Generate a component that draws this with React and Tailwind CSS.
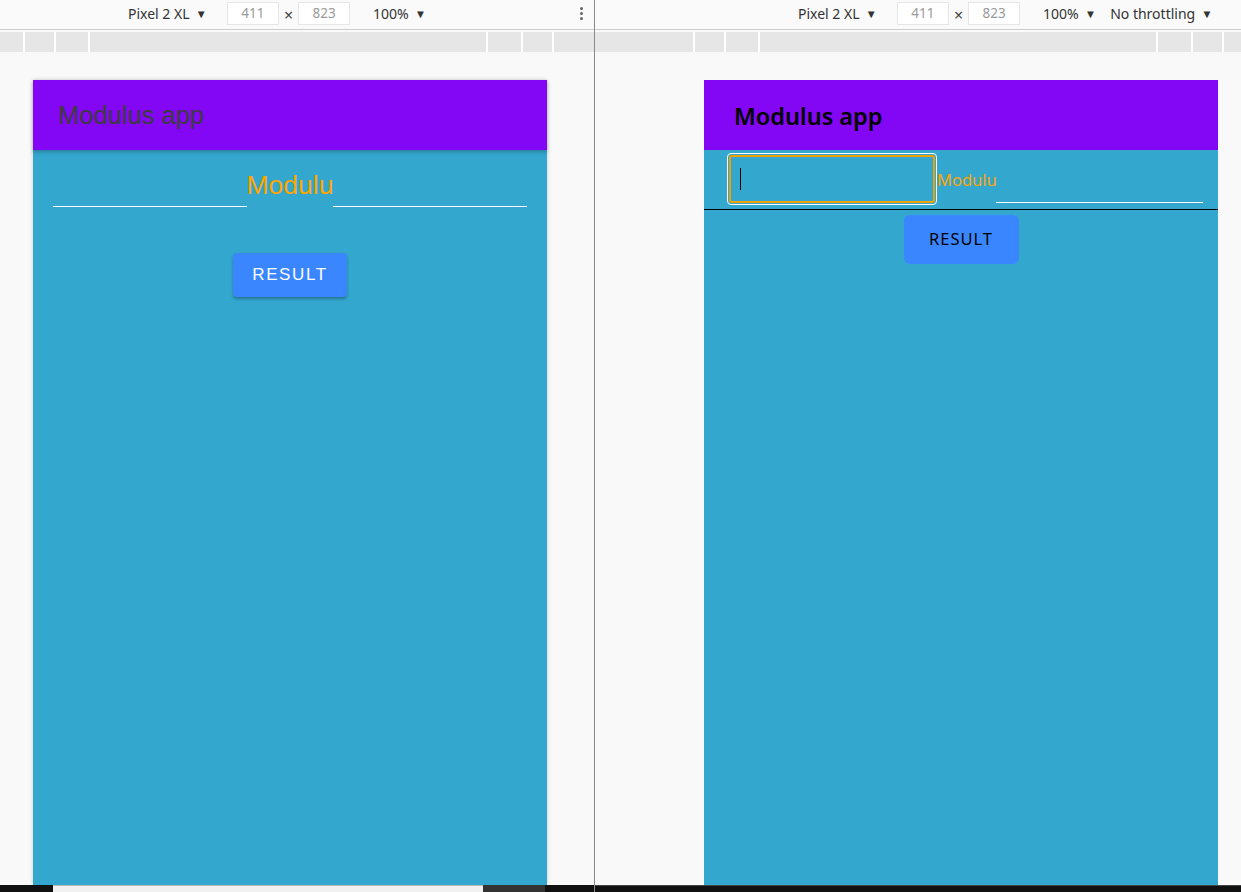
import React from 'react';

const toolbarFont = { fontFamily: '"Noto Sans", "Open Sans", sans-serif' };

const Caret = () => <span className="text-[11.5px] text-[#333] ml-[6px]">▼</span>;

const SizeBox = ({ value }) => (
    <div className="w-[52px] h-[23px] border border-[#e6e6e6] bg-white flex items-center justify-center text-[13.5px] text-[#9a9a9a]">
        {value}
    </div>
);

// barre d'outils du mode appareil
const Toolbar = ({ left, throttling, kebab }) => (
    <div className="h-[30px] border-b border-[#cdcdcd] bg-[#fafafa] flex items-center text-[14px] text-[#333] pb-[2px]" style={toolbarFont}>
        <div className="flex items-center" style={{ marginLeft: left }}>
            <span>Pixel 2 XL</span>
            <Caret />
        </div>
        <div className="flex items-center ml-[20px]">
            <SizeBox value="411" />
            <span className="mx-[5px] mt-[3px] text-[16px] text-[#444]">×</span>
            <SizeBox value="823" />
        </div>
        <div className="flex items-center ml-[23px]">
            <span>100%</span>
            <Caret />
        </div>
        {throttling && (
            <div className="flex items-center ml-[14px]">
                <span>No throttling</span>
                <Caret />
            </div>
        )}
        {kebab && (
            <div className="ml-auto mr-[11px] flex flex-col gap-[2px]">
                <span className="w-[3px] h-[3px] rounded-full bg-[#666]" />
                <span className="w-[3px] h-[3px] rounded-full bg-[#666]" />
                <span className="w-[3px] h-[3px] rounded-full bg-[#666]" />
            </div>
        )}
    </div>
);

const Ruler = ({ widths }) => (
    <div className="mt-[2px] h-[20px] flex">
        {widths.map((w, i) => (
            <div key={i} className="h-full bg-[#e6e6e6] border-r-2 border-white" style={{ width: w }} />
        ))}
        <div className="h-full flex-1 bg-[#e6e6e6]" />
    </div>
);

const LeftApp = () => (
    <div className="w-[514px] h-full bg-[#34a7cf] shadow-[0_0_4px_rgba(0,0,0,0.18)] flex flex-col">
        <div className="h-[70px] bg-[#8307f4] flex items-center pl-[25px] shadow-[0_2px_4px_rgba(0,0,0,0.25)] relative z-10">
            <span className="text-[25.5px] text-[#3c3c3c]" style={{ fontFamily: '"Liberation Sans", Arial, sans-serif' }}>Modulus app</span>
        </div>
        <div className="flex items-end px-[20px] h-[57px]">
            <div className="flex-1 border-b border-white" />
            <span className="text-[26.5px] leading-none text-[#ffa500] mb-[9px]" style={{ fontFamily: '"Liberation Sans", Arial, sans-serif' }}>Modulu</span>
            <div className="flex-1 border-b border-white" />
        </div>
        <div className="flex justify-center mt-[46px]">
            <button className="w-[114px] h-[44px] rounded-[4px] bg-[#3a86ff] text-white text-[17px] tracking-[1.6px] shadow-[0_2px_3px_rgba(0,0,0,0.3)]" style={{ fontFamily: '"Liberation Sans", Arial, sans-serif' }}>
                RESULT
            </button>
        </div>
    </div>
);

const RightApp = () => (
    <div className="w-[514px] h-full bg-[#34a7cf] flex flex-col" style={{ fontFamily: '"Noto Sans", "Open Sans", sans-serif' }}>
        <div className="h-[70px] bg-[#8307f4] flex items-center pl-[30px] pt-[4px]">
            <span className="text-[23.5px] font-semibold text-black">Modulus app</span>
        </div>
        <div className="flex items-start pl-[23px] pr-[15px] h-[60px] border-b border-black pt-[3px]">
            <div className="w-[210px] h-[52px] rounded-[4px] border border-white p-[1px] shrink-0">
                <div className="w-full h-full rounded-[3px] border-2 border-[#f0a000] flex items-center pl-[9px]">
                    <span className="w-[1px] h-[22px] bg-black" />
                </div>
            </div>
            <span className="text-[16.5px] text-[#ffa500] mt-[15px] mr-[-1px]">Modulu</span>
            <div className="flex-1 h-[50px] border-b border-white" />
        </div>
        <div className="flex justify-center mt-[5px]">
            <button className="w-[115px] h-[49px] rounded-[6px] bg-[#3a86ff] text-black text-[16.5px] tracking-[1px]">
                RESULT
            </button>
        </div>
    </div>
);

export default function App() {
    return (
        <div className="w-[1241px] h-[892px] overflow-hidden flex bg-[#fafafa]">
            {/* panneau gauche */}
            <div className="w-[594px] h-full flex flex-col">
                <Toolbar left="128px" kebab />
                <Ruler widths={['25px', '31px', '34px', '398px', '35px', '31px']} />
                <div className="flex-1 min-h-0 pt-[28px] pl-[33px] bg-[#f9f9f9]">
                    <LeftApp />
                </div>
                <div className="h-[7px] flex bg-[#111]">
                    <div className="w-[53px]" />
                    <div className="w-[430px] bg-[#f1f1f1] border-t border-[#bbb]" />
                    <div className="w-[62px] bg-[#333]" />
                </div>
            </div>
            <div className="w-[1px] h-full bg-[#8a8a8a]" />
            {/* panneau droit */}
            <div className="flex-1 h-full flex flex-col">
                <Toolbar left="203px" throttling />
                <Ruler widths={['100px', '31px', '34px', '398px', '35px', '31px']} />
                <div className="flex-1 min-h-0 pt-[28px] pl-[109px] bg-[#f9f9f9]">
                    <RightApp />
                </div>
                <div className="h-[7px] bg-[#111] border-t border-[#444]" />
            </div>
        </div>
    );
}
